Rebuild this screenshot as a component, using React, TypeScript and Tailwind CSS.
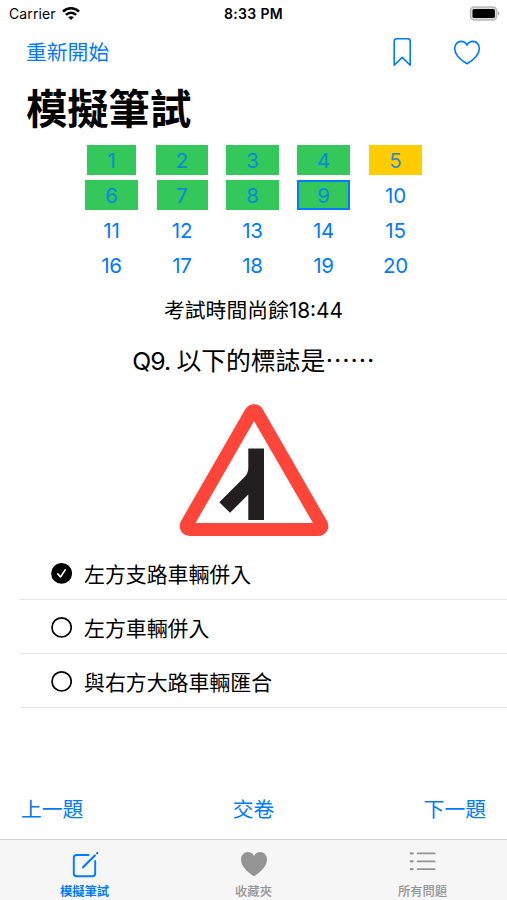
import { useState } from "react"

const TOTAL = 20
const ANSWERED = [1, 2, 3, 4, 6, 7, 8, 9]
const SKIPPED = [5]

const OPTIONS = ["左方支路車輛併入", "左方車輛併入", "與右方大路車輛匯合"]

const CELL_WIDTH: Record<number, string> = {
    1: "w-[49px]",
    2: "w-[52px]",
    7: "w-[51px]",
}

function StatusBar() {
    return (
        <div className="relative flex h-[27px] items-center justify-between pl-[9px] pr-[7px] text-black">
            <div className="flex items-center gap-[6px]">
                <span className="text-[14px] tracking-[0.1px]">Carrier</span>
                <svg width="18" height="14" viewBox="0 0 18 14" fill="none" stroke="black" strokeWidth="2.5">
                    <path d="M1 4.6C5.4.2 12.6.2 17 4.6" />
                    <path d="M3.9 7.8c2.8-2.9 7.4-2.9 10.2 0" />
                    <path d="M9 13.1 6.2 10.3c1.5-1.5 4.1-1.5 5.6 0Z" fill="black" stroke="none" />
                </svg>
            </div>
            <span className="absolute left-0 w-full text-center text-[14px] font-semibold tracking-[0.35px]">
                8:33 PM
            </span>
            <svg width="31" height="16" viewBox="0 0 31 16">
                <rect x="1.5" y="1" width="26.2" height="13" rx="3.8" fill="#ddd" stroke="#b8b8b8" strokeWidth="1.4" />
                <rect x="3.5" y="3" width="22.4" height="9" rx="1.6" fill="black" />
                <path d="M29 5.3c2 .8 2 3.6 0 4.4Z" fill="#a8a8a8" />
            </svg>
        </div>
    )
}

function NavBar() {
    return (
        <div className="flex h-[49px] items-center justify-between px-[26px] text-[#007aff]">
            <button className="pt-[4px] text-[20.8px] leading-none">重新開始</button>
            <div className="flex items-center gap-[41px]">
                <svg width="20" height="30" viewBox="0 0 20 30" fill="none" stroke="currentColor" strokeWidth="1.6" strokeLinejoin="round">
                    <path d="M2.2 28.2V4.2Q2.2 1.8 4.6 1.8H15.8Q18.2 1.8 18.2 4.2V28.2L10.2 20.4Z" />
                </svg>
                <svg width="28" height="26" viewBox="0 0 28 26" fill="none" stroke="currentColor" strokeWidth="1.6" strokeLinejoin="round">
                    <path d="M14 24.7C10.5 22.6 1.7 16.5 1.7 9.4C1.7 5.3 4.5 2.4 8.1 2.4C10.7 2.4 12.8 3.8 14 6C15.2 3.8 17.3 2.4 19.9 2.4C23.5 2.4 26.3 5.3 26.3 9.4C26.3 16.5 17.5 22.6 14 24.7Z" />
                </svg>
            </div>
        </div>
    )
}

function QuestionGrid({ current }: { current: number }) {

    const numbers = Array.from({ length: TOTAL }, (_, i) => i + 1)

    return (
        <div className="ml-[76px] grid grid-cols-[71px_70px_71px_71px_73px] gap-y-[5px] text-[20.5px] tracking-[-0.2px] text-[#007aff]">
            {numbers.map((n) => {
                let bg = ""
                if (ANSWERED.includes(n)) bg = "bg-[#34c759]"
                if (SKIPPED.includes(n)) bg = "bg-[#ffcc00]"

                return (
                    <button
                        key={n}
                        className={`mx-auto flex h-[30px] items-center justify-center ${CELL_WIDTH[n] || "w-[53px]"} ${bg} ${
                            n === current ? "border-2 border-[#007aff]" : ""
                        }`}
                    >
                        <span className={bg ? "pt-0.5 opacity-80" : "pt-0.5"}>{n}</span>
                    </button>
                )
            })}
        </div>
    )
}

function RoadSign() {
    return (
        <svg className="mx-auto" width="150" height="134" viewBox="0 0 150 134">
            <path
                d="M75 11.3 139.2 123H10.8Z"
                fill="#fe453a"
                stroke="#fe453a"
                strokeWidth="20.2"
                strokeLinejoin="round"
            />
            <path d="M75 18 134 120.1H16.5Z" fill="white" />
            <path d="M69.3 45.5H85V117H69.3V91.5L51 109.8 40.3 99.3 66 73.5Q69.3 70 69.3 64.5Z" fill="#231f20" />
        </svg>
    )
}

function OptionRow({ label, checked, onSelect }: { label: string; checked: boolean; onSelect: () => void }) {
    return (
        <button
            onClick={onSelect}
            className="flex h-[54px] w-full items-center gap-3 border-b border-[#e6e6e8] pl-[31px] pt-px text-left"
        >
            <svg width="21" height="22" viewBox="0 0 21 22" fill="none">
                <circle cx="10.6" cy="11.4" r="9.6" fill={checked ? "black" : "none"} stroke="black" strokeWidth="1.7" />
                {checked && (
                    <path d="m6.8 11.9 2.7 3.1 4.8-7.2" stroke="white" strokeWidth="1.6" strokeLinecap="round" strokeLinejoin="round" />
                )}
            </svg>
            <span className="pt-1 text-[20.9px] leading-none">{label}</span>
        </button>
    )
}

function TabBar() {
    return (
        <div className="grid h-[61px] grid-cols-3 border-t border-[#d4d4d4] bg-[#f6f6f6] text-[12.3px] leading-none text-[#949494]">
            <div className="flex flex-col items-center pt-[10px] font-bold text-[#007aff]">
                <svg width="28" height="29" viewBox="0 0 28 29" fill="none" stroke="currentColor" strokeWidth="1.9" strokeLinecap="round">
                    <path d="M17.5 5H5.5Q2.8 5 2.8 7.7V23.5Q2.8 26.2 5.5 26.2H21.5Q24.2 26.2 24.2 23.5V11" />
                    <path d="M12 17.3 23.9 5.4M26 3.3l.4-.4" strokeWidth="2.1" />
                </svg>
                <span className="mt-[7px]">模擬筆試</span>
            </div>
            <div className="flex flex-col items-center pt-[10px]">
                <svg width="28" height="29" viewBox="0 0 28 29" fill="currentColor">
                    <path d="M14 26.2C10.2 23.9 1 17.2 1 9.7C1 5.2 4 2 7.8 2C10.5 2 12.8 3.5 14 5.9C15.2 3.5 17.5 2 20.2 2C24 2 27 5.2 27 9.7C27 17.2 17.8 23.9 14 26.2Z" />
                </svg>
                <span className="mt-[7px] font-medium">收藏夾</span>
            </div>
            <div className="flex flex-col items-center pt-[10px]">
                <svg width="28" height="29" viewBox="0 0 28 29" fill="none" stroke="currentColor" strokeLinecap="round">
                    <path d="M8.6 3.4H25.8M8.6 11.3H25.8M8.6 19.2H25.8" strokeWidth="1.7" />
                    <path d="M1.8 3.4h1.8M1.8 11.3h1.8M1.8 19.2h1.8" strokeWidth="2.3" />
                </svg>
                <span className="mt-[7px] font-medium">所有問題</span>
            </div>
        </div>
    )
}

export default function App() {

    const [selected, setSelected] = useState(0)

    return (

        <div className="flex h-[900px] w-[507px] flex-col overflow-hidden bg-white font-['Inter','Noto_Sans_CJK_TC',sans-serif] text-black">

            <StatusBar />
            <NavBar />

            <h1 className="flex h-[69px] items-center pl-[26px] pb-px text-[41.3px] font-bold leading-none">
                模擬筆試
            </h1>

            <QuestionGrid current={9} />

            <p className="mt-[15px] h-[31px] text-center text-[20.8px] leading-[31px]">
                考試時間尚餘18:44
            </p>

            <h2 className="mt-[17px] h-9 text-center text-[24.8px] leading-9">
                <span className="tracking-[-0.9px]">Q9. </span>以下的標誌是⋯⋯
            </h2>

            <div className="mt-6">
                <RoadSign />
            </div>

            <div className="mt-[9px] ml-5">
                {OPTIONS.map((label, i) => (
                    <OptionRow
                        key={label}
                        label={label}
                        checked={selected === i}
                        onSelect={() => setSelected(i)}
                    />
                ))}
            </div>

            <div className="mt-auto flex h-[62px] items-center justify-between px-[21px] pt-1 text-[20.8px] leading-none text-[#007aff]">
                <button>上一題</button>
                <button>交卷</button>
                <button>下一題</button>
            </div>

            <TabBar />

        </div>

    )
}
